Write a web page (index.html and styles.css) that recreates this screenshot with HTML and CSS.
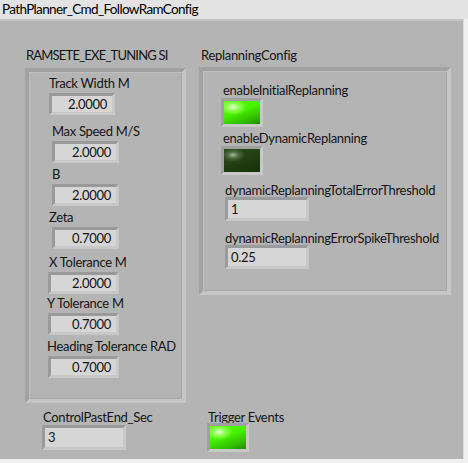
FILE: index.html
```html
<!DOCTYPE html>
<html>
<head>
<meta charset="utf-8">
<link rel="stylesheet" href="styles.css">
</head>
<body>
<div class="titlebar">PathPlanner_Cmd_FollowRamConfig</div>
<div class="panel">
  <div class="top-row">
    <div class="cluster cluster-tuning">
      <div class="caption">RAMSETE_EXE_TUNING SI</div>
      <div class="frame frame-tuning">
        <div class="ctl ctl-track">
          <div class="label">Track Width M</div>
          <div class="num">2.0000</div>
        </div>
        <div class="ctl ctl-speed">
          <div class="label">Max Speed M/S</div>
          <div class="num">2.0000</div>
        </div>
        <div class="ctl ctl-b">
          <div class="label">B</div>
          <div class="num">2.0000</div>
        </div>
        <div class="ctl ctl-zeta">
          <div class="label">Zeta</div>
          <div class="num">0.7000</div>
        </div>
        <div class="ctl ctl-xtol">
          <div class="label">X Tolerance M</div>
          <div class="num">2.0000</div>
        </div>
        <div class="ctl ctl-ytol">
          <div class="label">Y Tolerance M</div>
          <div class="num">0.7000</div>
        </div>
        <div class="ctl ctl-htol">
          <div class="label">Heading Tolerance RAD</div>
          <div class="num">0.7000</div>
        </div>
      </div>
    </div>
    <div class="cluster cluster-replan">
      <div class="caption">ReplanningConfig</div>
      <div class="frame frame-replan">
        <div class="ctl">
          <div class="label">enableInitialReplanning</div>
          <div class="led on"></div>
        </div>
        <div class="ctl ctl-dyn">
          <div class="label">enableDynamicReplanning</div>
          <div class="led off"></div>
        </div>
        <div class="ctl ctl-total">
          <div class="label">dynamicReplanningTotalErrorThreshold</div>
          <div class="num text">1</div>
        </div>
        <div class="ctl ctl-spike">
          <div class="label">dynamicReplanningErrorSpikeThreshold</div>
          <div class="num text">0.25</div>
        </div>
      </div>
    </div>
  </div>
  <div class="bottom-row">
    <div class="ctl ctl-past">
      <div class="label">ControlPastEnd_Sec</div>
      <div class="num text wide">3</div>
    </div>
    <div class="ctl ctl-trigger">
      <div class="label">Trigger Events</div>
      <div class="led on"></div>
    </div>
  </div>
</div>
</body>
</html>
```

FILE: styles.css
```css
html, body {
  margin: 0;
  padding: 0;
}
body {
  width: 468px;
  height: 463px;
  background: #f0f0f0;
  font-family: "Lato", "Open Sans", sans-serif;
  font-size: 13px;
  letter-spacing: -0.3px;
  color: #141414;
  overflow: hidden;
}
.titlebar {
  height: 19px;
  line-height: 18px;
  padding-left: 2px;
  background: #e3e3e3;
  font-size: 13.5px;
  letter-spacing: -0.65px;
  color: #000;
}
.panel {
  box-sizing: border-box;
  width: 464px;
  height: 440px;
  background: #b4b4b4;
  border-top: 2px solid #c4c4c4;
  border-right: 1px solid #dcdcdc;
  padding: 26px 0 0 25px;
  display: flex;
  flex-direction: column;
}
.top-row {
  display: flex;
  align-items: flex-start;
  gap: 13px;
}
.caption {
  height: 21px;
  line-height: 16px;
  padding-left: 1px;
}
.cluster-tuning .caption {
  letter-spacing: -0.8px;
}
.cluster-replan .caption {
  padding-left: 2px;
  height: 20px;
}
.frame {
  box-sizing: border-box;
  border: 4px solid;
  border-color: #a2a2a2 #c6c6c6 #c6c6c6 #a2a2a2;
  box-shadow: inset 1px 1px 0 #bebebe, inset -1px -1px 0 #a8a8a8;
  display: flex;
  flex-direction: column;
  align-items: flex-start;
}
.frame-tuning {
  width: 161px;
  height: 335px;
  padding: 3px 0 0 20px;
}
.frame-replan {
  width: 252px;
  height: 228px;
  padding: 11px 0 0 20px;
}
.label {
  line-height: 16px;
  height: 16px;
  white-space: nowrap;
}
.ctl {
  display: flex;
  flex-direction: column;
  align-items: flex-start;
}
.num {
  box-sizing: border-box;
  height: 22px;
  width: 66px;
  margin-top: 2px;
  border: 3px solid;
  border-color: #9a9a9a #c8c8c8 #c8c8c8 #9a9a9a;
  background: #d6d6d6;
  text-align: right;
  padding-right: 5px;
  line-height: 16px;
}
.num.text {
  text-align: left;
  padding-left: 3px;
  width: 84px;
  height: 24px;
  line-height: 18px;
  margin-top: -1px;
}
.ctl-speed { margin-top: 8px; padding-left: 3px; }
.ctl-speed .num, .ctl-b .num { width: 67px; }
.ctl-b { margin-top: 3px; padding-left: 3px; }
.ctl-zeta { margin-top: 3px; }
.ctl-zeta .num { margin-left: 3px; width: 67px; }
.ctl-xtol { margin-top: 5px; }
.ctl-xtol .num, .ctl-ytol .num, .ctl-htol .num { width: 71px; margin-left: -1px; }
.ctl-ytol { margin-top: 1px; margin-left: -2px; }
.ctl-ytol .num, .ctl-htol .num { margin-left: 1px; }
.ctl-htol { margin-top: 3px; margin-left: -2px; }

.led {
  box-sizing: border-box;
  width: 42px;
  height: 29px;
  border: 3px solid;
  border-color: #a0a0a0 #c8c8c8 #c8c8c8 #a0a0a0;
  margin-left: -2px;
}
.led.on {
  background: radial-gradient(ellipse 14px 8px at 9px 6px, #e8ffd8 0%, #8dff52 45%, rgba(80,255,0,0) 100%),
              linear-gradient(160deg, #55ff0a 0%, #45f000 45%, #2fb800 80%, #1f8a00 100%);
}
.led.off {
  background: radial-gradient(ellipse 12px 7px at 9px 6px, #a8b8a0 0%, #4e6a40 45%, rgba(40,70,20,0) 100%),
              linear-gradient(160deg, #2b4a1a 0%, #213f10 50%, #16300a 100%);
}
.ctl-dyn { margin-top: 3px; }
.ctl-total { margin-top: 7px; padding-left: 2px; }
.ctl-spike { margin-top: 9px; padding-left: 2px; }

.bottom-row {
  display: flex;
  align-items: flex-start;
  margin-top: 6px;
  padding-left: 17px;
}
.ctl-past { width: 165px; }
.ctl-past .label { padding-left: 1px; }
.ctl-past .num.wide { width: 84px; height: 25px; margin-top: 0; }
.ctl-trigger .label { padding-left: 1px; }
.ctl-trigger .led { margin-top: -2px; margin-left: 0; }
```
